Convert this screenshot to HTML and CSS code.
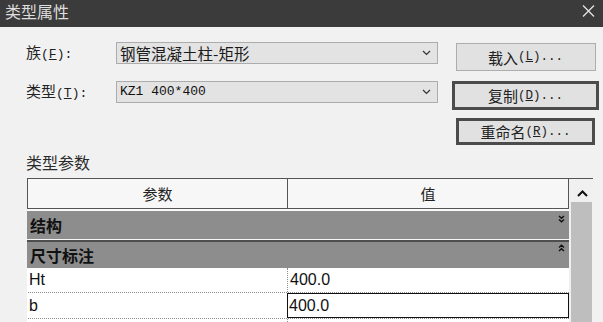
FILE: index.html
```html
<!DOCTYPE html>
<html lang="zh-CN">
<head>
<meta charset="utf-8">
<title>类型属性</title>
<link rel="stylesheet" href="styles.css">
</head>
<body>
<div class="dialog">
  <div class="titlebar">
    <span class="title">类型属性</span>
    <svg class="close" width="13" height="12" viewBox="0 0 13 12"><path d="M1 0.5 L12 11.5 M12 0.5 L1 11.5" stroke="#e4e4e4" stroke-width="1.3" fill="none"/></svg>
  </div>

  <div class="upper">
    <div class="fields">
      <div class="field">
        <span class="label">族<span class="a">(<u>F</u>):</span></span>
        <div class="combo">
          <span class="combo-text">钢管混凝土柱-矩形</span>
          <svg width="9" height="6" viewBox="0 0 9 6"><path d="M1 1 L4.5 4.5 L8 1" fill="none" stroke="#333" stroke-width="1.2"/></svg>
        </div>
      </div>
      <div class="field">
        <span class="label">类型<span class="a">(<u>T</u>):</span></span>
        <div class="combo">
          <span class="combo-text mono">KZ1 400*400</span>
          <svg width="9" height="6" viewBox="0 0 9 6"><path d="M1 1 L4.5 4.5 L8 1" fill="none" stroke="#333" stroke-width="1.2"/></svg>
        </div>
      </div>
    </div>
    <div class="buttons">
      <div class="btn btn-load">载入<span class="a">(<u>L</u>)...</span></div>
      <div class="btn btn-focus btn-copy">复制<span class="a">(<u>D</u>)...</span></div>
      <div class="btn btn-focus btn-rename">重命名<span class="a">(<u>R</u>)...</span></div>
    </div>
  </div>

  <div class="section-label">类型参数</div>

  <div class="params">
    <div class="grid">
      <div class="grid-head">
        <div class="head-cell head-name">参数</div>
        <div class="head-cell">值</div>
      </div>
      <div class="head-gap"></div>
      <div class="group-row">
        <span class="group-title">结构</span>
        <svg class="chev" width="7" height="8" viewBox="0 0 7 8"><path d="M1 1 L3.5 3.3 L6 1 M1 4.5 L3.5 6.8 L6 4.5" stroke="#111" stroke-width="1.4" fill="none"/></svg>
      </div>
      <div class="row-gap"></div>
      <div class="group">
        <div class="group-row group-row-open">
          <span class="group-title">尺寸标注</span>
          <svg class="chev chev-up" width="7" height="8" viewBox="0 0 7 8"><path d="M1 3.5 L3.5 1.2 L6 3.5 M1 7 L3.5 4.7 L6 7" stroke="#111" stroke-width="1.4" fill="none"/></svg>
        </div>
        <div class="prow">
          <div class="pname">Ht</div>
          <div class="pval">400.0</div>
        </div>
        <div class="prow">
          <div class="pname">b</div>
          <div class="pval pval-edit">400.0</div>
        </div>
        <div class="prow">
          <div class="pname"></div>
          <div class="pval"></div>
        </div>
      </div>
    </div>
    <div class="scrollbar">
      <div class="scroll-up">
        <svg width="11" height="7" viewBox="0 0 11 7"><path d="M1 6 L5.5 1.5 L10 6" stroke="#111" stroke-width="2" fill="none"/></svg>
      </div>
      <div class="thumb"></div>
    </div>
  </div>
</div>
</body>
</html>
```

FILE: styles.css
```css
* { box-sizing: border-box; }

html, body {
  margin: 0;
  padding: 0;
  width: 603px;
  height: 322px;
  overflow: hidden;
  background: #f0f0f0;
}

.dialog {
  display: flex;
  flex-direction: column;
  width: 603px;
  height: 322px;
  background: #f1f1f1;
  color: #202020;
  font-family: "Noto Sans CJK SC", "Liberation Sans", sans-serif;
}

.dialog > * { flex: none; }

.titlebar {
  height: 27px;
  background: #3b3b3b;
  display: flex;
  justify-content: space-between;
  align-items: flex-start;
  padding: 0 8px 0 5px;
}

.title {
  color: #dedede;
  font-size: 16px;
  line-height: 23px;
}

.close { margin-top: 5px; }

.upper { display: flex; }

.fields {
  display: flex;
  flex-direction: column;
  gap: 17px;
  padding: 15px 0 0 26px;
  width: 438px;
}

.field {
  display: flex;
  align-items: center;
  height: 22px;
}

.label {
  width: 90px;
  font-size: 15px;
  line-height: 22px;
  color: #222;
}

.a {
  font-family: "Liberation Mono", monospace;
  font-size: 13px;
}

.combo {
  width: 322px;
  height: 22px;
  background: #e3e3e3;
  border: 1px solid #acacac;
  display: flex;
  align-items: center;
  justify-content: space-between;
  padding: 0 6px 0 3px;
}

.combo-text {
  font-size: 15.5px;
  line-height: 20px;
  color: #1a1a1a;
}

.combo-text.mono {
  font-family: "Liberation Mono", monospace;
  font-size: 13px;
  color: #111;
}

.buttons {
  margin-left: 14px;
  width: 147px;
  display: flex;
  flex-direction: column;
  align-items: center;
  padding-top: 16px;
}

.btn {
  display: flex;
  align-items: center;
  justify-content: center;
  background: #e1e1e1;
  border: 1px solid #adadad;
  font-size: 15px;
  color: #222;
}

.btn .a { font-size: 12.5px; }

.btn-load { width: 140px; height: 28px; }

.btn-focus { border: 3px solid #4b4b4b; }

.btn-copy { width: 147px; height: 29px; margin-top: 10px; }

.btn-rename { width: 139px; height: 27px; margin-top: 8px; }

.section-label {
  margin: 8px 0 0 26px;
  font-size: 16px;
  line-height: 18px;
  color: #2a2a2a;
}

.dialog > .params {
  display: flex;
  margin: 7px 0 0 27px;
  flex: 1;
  min-height: 0;
  overflow: hidden;
}

.grid {
  width: 542px;
  flex: none;
}

.grid-head {
  display: grid;
  grid-template-columns: 260px 1fr;
  height: 31px;
  border: 1px solid #555;
  background: #f7f7f7;
}

.head-cell {
  display: flex;
  align-items: center;
  justify-content: center;
  font-size: 15px;
  color: #222;
}

.head-name { border-right: 1px solid #555; }

.head-gap { height: 2px; background: #fafafa; }

.row-gap { height: 1px; background: #f6f6f6; }

.group-row {
  height: 28px;
  background: #8d8d8d;
  display: flex;
  justify-content: space-between;
  align-items: center;
  padding: 0 4px 0 3px;
}

.group-title {
  font-size: 16px;
  font-weight: bold;
  color: #111;
  line-height: 20px;
}

.chev { align-self: flex-start; margin-top: 4px; }

.chev-up { margin-top: 2px; }

.group {
  margin: 0 -3px 0 -5px;
  border: 2px solid #4e4e4e;
  border-bottom: none;
  padding: 0 1px 0 2px;
  background: #f0f0f0;
}

.group-row-open {
  height: 26px;
  border-left: 1px solid #444;
}

.prow {
  display: grid;
  grid-template-columns: 261px 1fr;
  height: 25px;
  background: #fff;
  border-left: 1px solid #444;
  border-bottom: 1px dotted #8a8a8a;
  font-family: "Liberation Sans", sans-serif;
  font-size: 16px;
  color: #111;
}

.prow + .prow { height: 26px; }

.pname {
  display: flex;
  align-items: center;
  padding-left: 2px;
  border-right: 1px dotted #8a8a8a;
}

.pval {
  display: flex;
  align-items: center;
  padding-left: 2px;
}

.pval-edit {
  border: 1px solid #111;
  padding-left: 1px;
  margin-left: -1px;
}

.scrollbar {
  width: 24px;
  flex: none;
  border-top: 1px solid #555;
  display: flex;
  flex-direction: column;
  background: #f0f0f0;
}

.scroll-up {
  height: 23px;
  flex: none;
  display: flex;
  justify-content: center;
  padding: 11px 0 0 2px;
}

.thumb {
  flex: 1;
  margin: 0 1px 0 2px;
  background: #bebebe;
}
```
